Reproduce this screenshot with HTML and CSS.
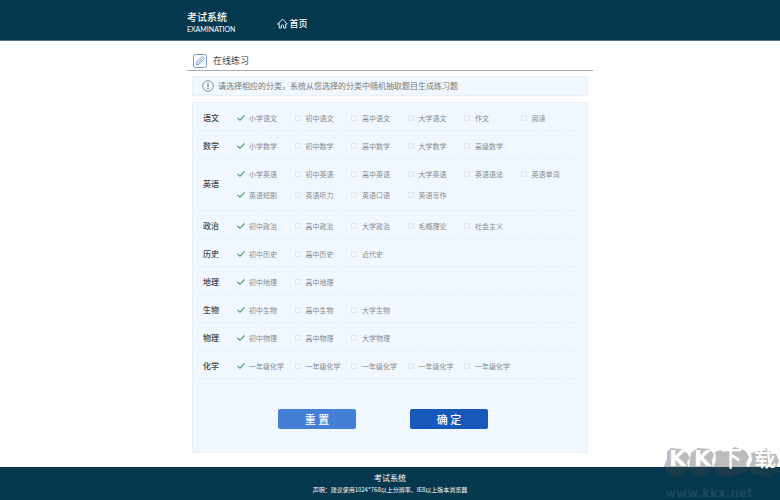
FILE: index.html
```html
<!DOCTYPE html>
<html lang="zh-CN">
<head>
    <meta charset="UTF-8">
    <meta name="viewport" content="width=device-width, initial-scale=1.0">
    <title>考试系统 - 在线练习</title>
    <link rel="stylesheet" href="styles.css">
</head>
<body>
    <header class="header">
        <div class="wrap header-inner">
            <div class="logo">
                <div class="logo-name">考试系统</div>
                <div class="logo-en">EXAMINATION</div>
            </div>
            <nav class="nav">
                <a class="nav-link" href="#">
                    <svg class="icon-home" viewBox="0 0 11 11" fill="none" stroke="currentColor" stroke-width="0.9" stroke-linejoin="round" stroke-linecap="round">
                        <path d="M0.8 6 L5.5 1 L10.2 6 H8.8 V10 H6.7 V7.4 Q5.5 6.4 4.3 7.4 V10 H2.2 V6 Z"/>
                    </svg>首页
                </a>
            </nav>
        </div>
    </header>

    <main class="wrap main">
        <div class="title-bar">
            <svg class="icon-edit" viewBox="0 0 14 14" fill="none" stroke="#5f93c4" stroke-width="0.9" stroke-linejoin="round">
                <rect x="0.5" y="0.5" width="13" height="13" rx="2"/>
                <path d="M3.4 10.9 L4 7.6 L8.3 3.1 Q9.4 2.2 10.5 3.3 Q11.5 4.4 10.6 5.5 L6.3 10 Z M5.2 9 L9.2 4.6"/>
            </svg>
            <h1>在线练习</h1>
        </div>

        <div class="notice">
            <svg class="icon-info" viewBox="0 0 12 12" fill="none" stroke="#777c82">
                <circle cx="6" cy="6" r="5.3" stroke-width="0.8"/>
                <path d="M6 2.8 V7" stroke-width="1.2"/>
                <path d="M6 8 V9.2" stroke-width="1.2"/>
            </svg>
            <span>请选择相应的分类，系统从您选择的分类中随机抽取题目生成练习题</span>
        </div>

        <form class="panel">
            <div class="row" role="group" aria-labelledby="g1">
                <div class="subject" id="g1">语文</div>
                <div class="options">
                    <label><input type="checkbox" checked>小学语文</label>
                    <label><input type="checkbox">初中语文</label>
                    <label><input type="checkbox">高中语文</label>
                    <label><input type="checkbox">大学语文</label>
                    <label><input type="checkbox">作文</label>
                    <label><input type="checkbox">阅读</label>
                </div>
            </div>
            <div class="row" role="group" aria-labelledby="g2">
                <div class="subject" id="g2">数学</div>
                <div class="options">
                    <label><input type="checkbox" checked>小学数学</label>
                    <label><input type="checkbox">初中数学</label>
                    <label><input type="checkbox">高中数学</label>
                    <label><input type="checkbox">大学数学</label>
                    <label><input type="checkbox">高级数学</label>
                </div>
            </div>
            <div class="row row-tall" role="group" aria-labelledby="g3">
                <div class="subject" id="g3">英语</div>
                <div class="options">
                    <label><input type="checkbox" checked>小学英语</label>
                    <label><input type="checkbox">初中英语</label>
                    <label><input type="checkbox">高中英语</label>
                    <label><input type="checkbox">大学英语</label>
                    <label><input type="checkbox">英语语法</label>
                    <label><input type="checkbox">英语单词</label>
                    <label><input type="checkbox" checked>英语短剧</label>
                    <label><input type="checkbox">英语听力</label>
                    <label><input type="checkbox">英语口语</label>
                    <label><input type="checkbox">英语写作</label>
                </div>
            </div>
            <div class="row" role="group" aria-labelledby="g4">
                <div class="subject" id="g4">政治</div>
                <div class="options">
                    <label><input type="checkbox" checked>初中政治</label>
                    <label><input type="checkbox">高中政治</label>
                    <label><input type="checkbox">大学政治</label>
                    <label><input type="checkbox">毛概理论</label>
                    <label><input type="checkbox">社会主义</label>
                </div>
            </div>
            <div class="row" role="group" aria-labelledby="g5">
                <div class="subject" id="g5">历史</div>
                <div class="options">
                    <label><input type="checkbox" checked>初中历史</label>
                    <label><input type="checkbox">高中历史</label>
                    <label><input type="checkbox">近代史</label>
                </div>
            </div>
            <div class="row" role="group" aria-labelledby="g6">
                <div class="subject" id="g6">地理</div>
                <div class="options">
                    <label><input type="checkbox" checked>初中地理</label>
                    <label><input type="checkbox">高中地理</label>
                </div>
            </div>
            <div class="row" role="group" aria-labelledby="g7">
                <div class="subject" id="g7">生物</div>
                <div class="options">
                    <label><input type="checkbox" checked>初中生物</label>
                    <label><input type="checkbox">高中生物</label>
                    <label><input type="checkbox">大学生物</label>
                </div>
            </div>
            <div class="row" role="group" aria-labelledby="g8">
                <div class="subject" id="g8">物理</div>
                <div class="options">
                    <label><input type="checkbox" checked>初中物理</label>
                    <label><input type="checkbox">高中物理</label>
                    <label><input type="checkbox">大学物理</label>
                </div>
            </div>
            <div class="row" role="group" aria-labelledby="g9">
                <div class="subject" id="g9">化学</div>
                <div class="options">
                    <label><input type="checkbox" checked>一年级化学</label>
                    <label><input type="checkbox">一年级化学</label>
                    <label><input type="checkbox">一年级化学</label>
                    <label><input type="checkbox">一年级化学</label>
                    <label><input type="checkbox">一年级化学</label>
                </div>
            </div>
            <div class="actions">
                <button type="reset" class="btn btn-reset">重 置</button>
                <button type="button" class="btn btn-ok">确 定</button>
            </div>
        </form>
    </main>

    <footer class="footer">
        <div class="footer-name">考试系统</div>
        <div class="footer-note">声明：建议使用1024*768以上分辨率、IE8以上版本浏览器</div>
    </footer>

    <svg class="watermark" viewBox="0 0 118 60">
        <g class="mark">
            <path d="M5 12 L9 8 L19 9 L25 13 L28 18 L25 22 L27 29 L20 34 L13 37 L5 33 L2 26 L5 19 Z"/>
            <path d="M29 13 L36 8 L47 9 L52 14 L50 21 L51 28 L46 34 L37 37 L29 33 L27 25 Z"/>
            <path d="M53 12 L61 9 L66 11 L73 7 L84 11 L87 17 L84 24 L87 30 L78 34 L67 38 L56 35 L51 28 L54 20 Z"/>
            <path d="M89 13 L97 11 L104 8 L109 12 L114 14 L117 21 L115 25 L118 32 L110 34 L107 38 L97 35 L89 33 L87 27 L90 20 Z"/>
        </g>
        <g class="mark-text">
            <text class="mark-latin" x="7" y="26">K</text>
            <text class="mark-latin" x="32" y="26">K</text>
            <text x="58" y="26">下</text>
            <text x="92" y="26">载</text>
        </g>
        <text class="mark-url" x="3" y="57">www.kkx.net</text>
    </svg>
</body>
</html>
```
FILE: styles.css
```css
* {
    box-sizing: border-box;
}
body {
    margin: 0;
    min-height: 100vh;
    display: flex;
    flex-direction: column;
    position: relative;
    background: #fff;
    color: #444;
    font-family: "Noto Sans CJK SC", "Liberation Sans", sans-serif;
    font-size: 8px;
    line-height: 12px;
}
.wrap {
    width: 100%;
    max-width: 406px;
    margin: 0 auto;
}

/* header */
.header {
    background: #03384f;
    border-bottom: 1px solid #4f7383;
    color: #fff;
}
.header-inner {
    display: flex;
    align-items: center;
    gap: 42px;
    padding: 10px 0 6px;
}
.logo-name {
    font-size: 10px;
    font-weight: 500;
    line-height: 14px;
}
.logo-en {
    font-family: Lato, sans-serif;
    font-size: 7px;
    line-height: 10px;
}
.nav {
    padding-top: 3px;
}
.nav-link {
    display: flex;
    align-items: center;
    gap: 1px;
    color: #fff;
    font-size: 9px;
    font-weight: 500;
    text-decoration: none;
}
.icon-home {
    width: 11px;
    height: 11px;
}

/* main */
.main {
    flex: 1;
}
.title-bar {
    display: flex;
    align-items: center;
    gap: 6px;
    padding: 13px 6px 2px;
    border-bottom: 1px solid #a9abb8;
}
.title-bar h1 {
    margin: 0;
    font-size: 9px;
    font-weight: 400;
}
.icon-edit {
    width: 14px;
    height: 14px;
}
.notice {
    display: flex;
    align-items: center;
    gap: 4px;
    margin: 5px 5px 6px;
    padding: 3px 9px;
    background: #f0f7fe;
    border: 1px solid #e9f1f8;
    color: #777;
}
.icon-info {
    width: 12px;
    height: 12px;
}
.panel {
    margin: 0 5px;
    padding: 0 11px 23px 6px;
    background: #f0f7fe;
    border: 1px solid #e7eff7;
}
.row {
    display: flex;
    align-items: center;
    padding: 4px 0 2px 4px;
    border-bottom: 1px dashed #e5ecf4;
}
.row-tall {
    padding-top: 4px;
    padding-bottom: 5px;
}
.subject {
    width: 34px;
    font-weight: 500;
}
.options {
    flex: 1;
    display: grid;
    grid-template-columns: repeat(6, 1fr);
    grid-auto-rows: 21px;
}
.options label {
    display: flex;
    align-items: center;
    gap: 4px;
    color: #85898e;
    font-size: 7px;
    white-space: nowrap;
}
.options input {
    appearance: none;
    flex: none;
    width: 6px;
    height: 6px;
    margin: 0 1px;
    border: 1px solid #e2e7ec;
}
.options input:checked {
    width: 8px;
    height: 8px;
    margin: 0;
    border: none;
    background: url("data:image/svg+xml,%3Csvg xmlns='http://www.w3.org/2000/svg' viewBox='0 0 8 8'%3E%3Cpath d='M0.4 3.8 L3 6.2 L7.6 1.4' fill='none' stroke='%233fa267' stroke-width='1.1'/%3E%3C/svg%3E") center / 8px 8px no-repeat;
}
.actions {
    display: flex;
    justify-content: center;
    gap: 54px;
    padding: 30px 9px 0 0;
}
.btn {
    width: 78px;
    height: 20px;
    padding: 0;
    border: none;
    border-radius: 2px;
    color: #fff;
    font-family: inherit;
    font-size: 11px;
    font-weight: 500;
    line-height: 20px;
    cursor: pointer;
}
.btn-reset {
    background: #447fd5;
}
.btn-ok {
    background: #1659bb;
}

/* footer */
.footer {
    padding: 5px 0 4px;
    background: #03384f;
    color: #fff;
    text-align: center;
}
.footer-note {
    font-size: 6px;
}

/* site mark over the bottom right corner */
.watermark {
    position: absolute;
    right: 0;
    bottom: 0;
    width: 118px;
    height: 60px;
    pointer-events: none;
}
.mark {
    fill: #434343;
    opacity: 0.35;
}
.mark-text {
    fill: #fff;
    font-size: 22px;
    font-weight: 500;
}
.mark-latin {
    font-family: "DejaVu Sans", sans-serif;
    font-weight: 700;
}
.mark-url {
    fill: #1d475b;
    font-family: "DejaVu Sans", sans-serif;
    font-size: 12px;
    font-weight: 700;
}
```
